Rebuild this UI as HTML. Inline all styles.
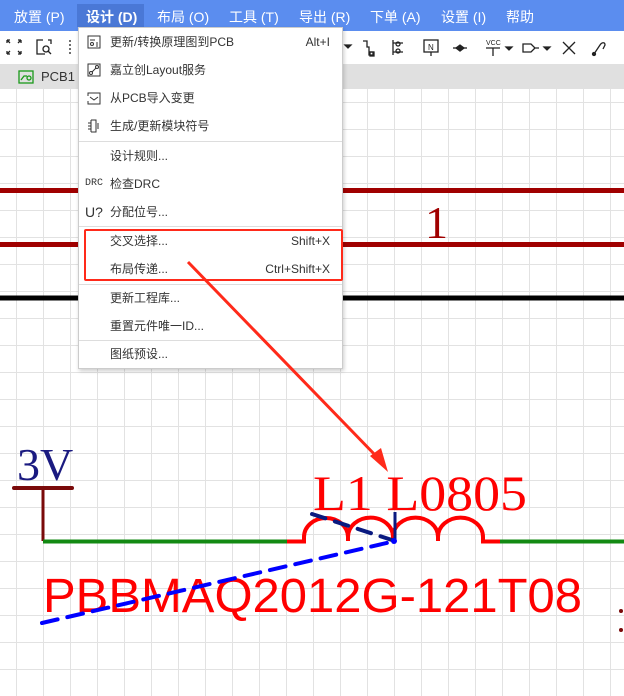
<!DOCTYPE html>
<html><head><meta charset="utf-8"><style>
*{margin:0;padding:0;box-sizing:border-box}
body{width:624px;height:696px;overflow:hidden;position:relative;background:#fff;font-family:"Liberation Sans","Noto Sans CJK SC",sans-serif}
#menubar{position:absolute;left:0;top:0;width:624px;height:31px;background:#5b8def;color:#fff;font-size:14px}
#menubar span{position:absolute;top:7px}
#toolbar{position:absolute;left:0;top:31px;width:624px;height:33px;background:#fff}
#tabs{position:absolute;left:0;top:64px;width:624px;height:25px;background:#e0e0e0}
#canvas{position:absolute;left:0;top:89px;width:624px;height:607px;background-color:#fff;
background-image:linear-gradient(to right,#e2e2e2 1px,transparent 1px),linear-gradient(to bottom,#e2e2e2 1px,transparent 1px);
background-size:27px 27px;background-position:16px -14px}
#menu{position:absolute;left:78px;top:27px;width:265px;height:342px;background:#fff;border:1px solid #ccc;box-shadow:1px 2px 4px rgba(0,0,0,.2);font-size:12px;color:#333}
.it{position:absolute;left:0;width:263px;height:28px;line-height:28px}
.it .t{position:absolute;left:31px}
.it .k{position:absolute;right:12px}
.sep{position:absolute;left:0;width:263px;height:1px;background:#ddd}
.ic{position:absolute;left:8px;top:7px;width:14px;height:14px}
</style></head><body>
<div id="canvas"></div>
<svg style="position:absolute;left:0;top:0" width="624" height="696">
<line x1="0" y1="190.5" x2="624" y2="190.5" stroke="#a00000" stroke-width="5"/>
<line x1="0" y1="244.5" x2="624" y2="244.5" stroke="#a00000" stroke-width="5"/>
<line x1="0" y1="298" x2="624" y2="298" stroke="#000" stroke-width="5"/>
<text x="425" y="238" font-family="Liberation Serif,serif" font-size="46" fill="#a00000">1</text>
<text x="17" y="480" font-family="Liberation Serif,serif" font-size="46" fill="#1a1a80">3V</text>
<line x1="14" y1="488" x2="72" y2="488" stroke="#7a0a0a" stroke-width="4" stroke-linecap="round"/>
<line x1="43" y1="488" x2="43" y2="541" stroke="#7a0a0a" stroke-width="3"/>
<line x1="43" y1="541.5" x2="288" y2="541.5" stroke="#138a13" stroke-width="4"/>
<line x1="500" y1="541.5" x2="624" y2="541.5" stroke="#138a13" stroke-width="4"/>
<path d="M287 541.5 H304 V537 A22 19 0 0 1 348 537 V541 V537 A22 19 0 0 1 393 537 V541 V537 A22 19 0 0 1 438 537 V541 V537 A22 19 0 0 1 483 537 V541.5 H500" fill="none" stroke="#ff0000" stroke-width="4"/>
<text x="313" y="510" font-family="Liberation Serif,serif" font-size="50" fill="#ff0000" textLength="214" lengthAdjust="spacingAndGlyphs">L1 L0805</text>
<text x="43" y="612" font-family="Liberation Sans,sans-serif" font-size="48" fill="#ff0000" textLength="539" lengthAdjust="spacingAndGlyphs">PBBMAQ2012G-121T08</text>
<line x1="42" y1="623" x2="395" y2="541" stroke="#0000ff" stroke-width="4" stroke-dasharray="16 10" stroke-linecap="round"/>
<line x1="312" y1="514" x2="395" y2="541" stroke="#0a1a80" stroke-width="4" stroke-dasharray="14 10" stroke-linecap="round"/>
<line x1="395" y1="512" x2="395" y2="541" stroke="#0a1a80" stroke-width="3"/>
<circle cx="394" cy="541" r="3" fill="#0000ff"/>
<circle cx="621" cy="611" r="2" fill="#7a0a0a"/><circle cx="621" cy="630" r="2" fill="#7a0a0a"/>
</svg>
<div id="menubar">
<span style="left:14px">放置 (P)</span>
<span style="left:77px;top:4px;height:23px;width:67px;background:#4a78d6;padding:3px 0 0 9px;font-weight:bold">设计 (D)</span>
<span style="left:157px">布局 (O)</span>
<span style="left:229px">工具 (T)</span>
<span style="left:299px">导出 (R)</span>
<span style="left:370px">下单 (A)</span>
<span style="left:441px">设置 (I)</span>
<span style="left:506px">帮助</span>
</div>
<div id="toolbar">
<svg width="624" height="33" style="position:absolute;left:0;top:0" fill="none" stroke="#222" stroke-width="1.3">
<path d="M7 9l3 3M21 9l-3 3M7 23l3-3M21 23l-3-3M7 9h3M7 9v3M21 9h-3M21 9v3M7 23h3M7 23v-3M21 23h-3M21 23v-3"/>
<path d="M43 9h-6v14h8M48 9h3v4"/><circle cx="46" cy="18" r="3"/><path d="M48 20l3 3"/>
<path d="M70 9v14" stroke-dasharray="2 2"/>
<path d="M345 14l3 3 3-3z" fill="#222"/>
<path d="M363 10h4v6h2v8h4v-3h-4"/><rect x="370" y="21" width="4" height="4"/>
<path d="M393 9v15M393 12h10M393 21h10"/><circle cx="398" cy="13" r="2"/><circle cx="398" cy="20" r="2"/>
<rect x="424" y="9" width="14" height="12"/><path d="M431 21v4"/>
<text x="428" y="19" font-size="8" fill="#222" stroke="none" font-family="Liberation Sans">N</text>
<path d="M453 17h14"/><path d="M456 17l4-3 4 3-4 3z" fill="#222"/>
<text x="486" y="14" font-size="7" fill="#222" stroke="none" font-family="Liberation Sans">VCC</text>
<path d="M486 17h14M493 17v8"/><path d="M506 16l3 3 3-3z" fill="#222"/>
<path d="M523 13h8l4 4-4 4h-8zM535 17h4"/><path d="M544 16l3 3 3-3z" fill="#222"/>
<path d="M563 11l12 12M575 11l-12 12"/>
<path d="M594 23l6-9c2-3 5-3 5 0l-2 4"/><circle cx="594" cy="23" r="1.5" fill="#222"/>
</svg>
</div>
<div id="tabs">
<svg width="16" height="14" style="position:absolute;left:18px;top:6px" fill="none" stroke="#1a9a1a" stroke-width="1.3"><rect x="1" y="1" width="14" height="12"/><path d="M3 10l3-4h3"/><circle cx="11" cy="8" r="2"/></svg>
<span style="position:absolute;left:41px;top:5px;font-size:13px;color:#333">PCB1</span>
</div>
<div id="menu">
<div class="it" style="top:0"><svg class="ic" fill="none" stroke="#333"><rect x="1" y="1" width="12" height="12"/><circle cx="5" cy="9" r="1.5"/><path d="M3 5h5M10 7v5"/></svg><span class="t">更新/转换原理图到PCB</span><span class="k">Alt+I</span></div>
<div class="it" style="top:28px"><svg class="ic" fill="none" stroke="#333"><rect x="1" y="1" width="12" height="12"/><circle cx="4" cy="10" r="1.5"/><circle cx="10" cy="4" r="1.5"/><path d="M5 9l4-4"/></svg><span class="t">嘉立创Layout服务</span></div>
<div class="it" style="top:56px"><svg class="ic" fill="none" stroke="#333"><path d="M1 5V2h12v11H1V10M3 6l4 3 4-3"/></svg><span class="t">从PCB导入变更</span></div>
<div class="it" style="top:84px"><svg class="ic" fill="none" stroke="#333"><path d="M4 1v12M1 4h3M1 7h3M1 10h3M4 1h5v12H4M11 4v6"/></svg><span class="t">生成/更新模块符号</span></div>
<div class="sep" style="top:113px"></div>
<div class="it" style="top:114px"><span class="t">设计规则...</span></div>
<div class="it" style="top:142px"><span style="position:absolute;left:6px;font-size:10px;font-family:'Liberation Mono',monospace">DRC</span><span class="t">检查DRC</span></div>
<div class="it" style="top:170px"><span style="position:absolute;left:6px;font-size:14px">U?</span><span class="t">分配位号...</span></div>
<div class="sep" style="top:198px"></div>
<div class="it" style="top:199px"><span class="t">交叉选择...</span><span class="k">Shift+X</span></div>
<div class="it" style="top:227px"><span class="t">布局传递...</span><span class="k">Ctrl+Shift+X</span></div>
<div class="sep" style="top:256px"></div>
<div class="it" style="top:256px"><span class="t">更新工程库...</span></div>
<div class="it" style="top:284px"><span class="t">重置元件唯一ID...</span></div>
<div class="sep" style="top:312px"></div>
<div class="it" style="top:312px"><span class="t">图纸预设...</span></div>
<div style="position:absolute;left:5px;top:201px;width:259px;height:52px;border:2px solid #ff2a1a;border-radius:2px"></div>
</div>
<svg style="position:absolute;left:0;top:0" width="624" height="696">
<line x1="188" y1="262" x2="378" y2="458" stroke="#ff2a1a" stroke-width="3"/>
<polygon points="388,472 370,456 381,448" fill="#ff2a1a"/>
</svg>
</body></html>
